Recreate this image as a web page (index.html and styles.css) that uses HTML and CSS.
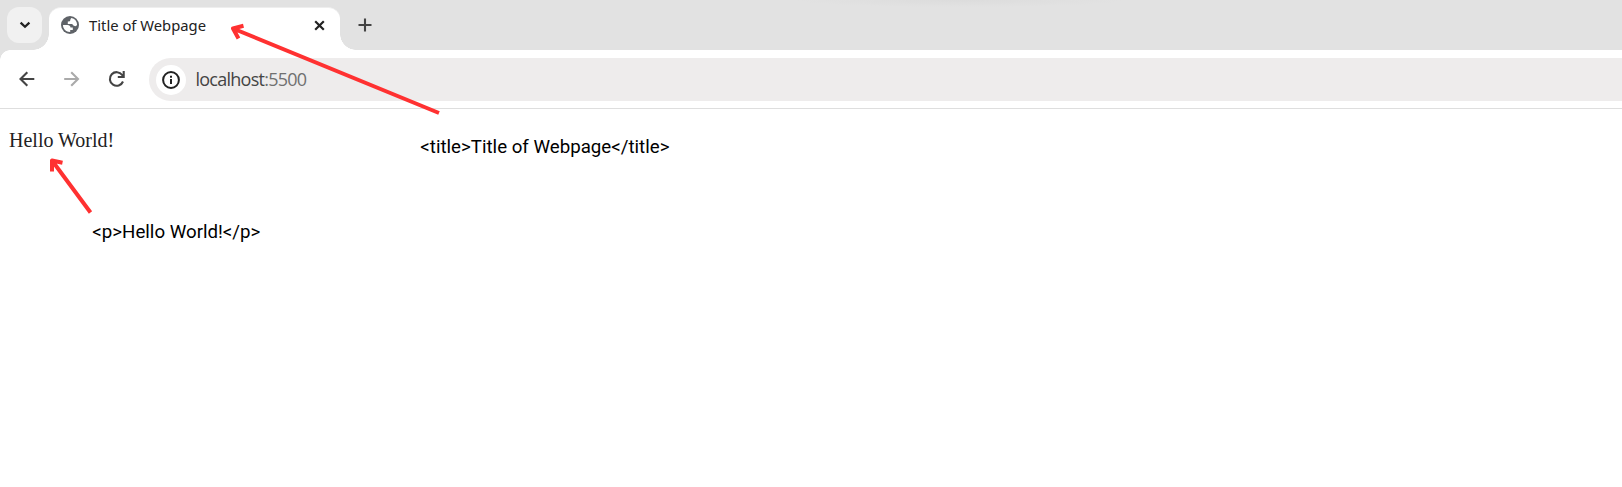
FILE: index.html
```html
<!DOCTYPE html>
<html lang="en">
<head>
<meta charset="utf-8">
<title>Title of Webpage</title>
<link rel="stylesheet" href="styles.css">
</head>
<body>
<header class="tabstrip">
  <button class="tab-search" aria-label="Search tabs"><svg width="12" height="8" viewBox="0 0 12 8"><path d="M1.600 1.700 6 5.800l4.400-4.100"/></svg></button>
  <div class="tab">
    <svg class="globe" width="18" height="18" viewBox="0 0 18 18"><circle cx="9" cy="9" r="9"/><path d="M2 9h4.500q2.800 0 3 2.600h2.300v2.300H9.200v2.200Q4.500 16.100 2.600 12Q1.900 10.500 2 9zM10.300 2Q15.800 3.200 16.100 8.800q-.5 1.600-2.500 1.300-2-.3-2.300-2H6.800V5.400q2.600.1 2.500-1.200 0-1.200 1-2.200z"/></svg>
    <span class="tab-title">Title of Webpage</span>
    <svg class="close" width="11" height="11" viewBox="0 0 11 11"><path d="m1.200 1.200 8.600 8.600M9.800 1.200 1.200 9.800"/></svg>
  </div>
  <svg class="new-tab" width="14" height="14" viewBox="0 0 14 14"><path d="M7 .5v13M.5 7h13"/></svg>
</header>
<nav class="toolbar">
  <svg class="nav-icon back" width="16" height="16" viewBox="0 0 16 16"><path d="M15.300 8H1.500M8.300 1.200 1.500 8l6.800 6.800"/></svg>
  <svg class="nav-icon forward" width="16" height="16" viewBox="0 0 16 16"><path d="M.2 8H14M7.200 1.200 14 8l-6.800 6.800"/></svg>
  <svg class="nav-icon reload" width="18" height="18" viewBox="0 0 18 18"><path d="M15 11.500A6.800 6.800 0 1 1 14.200 5l1.300 1.500M15.700 1v6H9.800"/></svg>
  <div class="address">
    <span class="site-info"><svg width="18" height="18" viewBox="0 0 18 18"><circle cx="9" cy="9" r="7.900"/><path d="M9 8v5M9 4.700v2"/></svg></span>
    <span class="url">localhost<span class="port">:5500</span></span>
  </div>
</nav>
<main class="page">
  <p class="hello">Hello World!</p>
  <svg class="arrows" width="460" height="230" viewBox="0 0 460 230"><path d="M439 113 233 28.500M243.500 25.800 233 28.500l5.500 10M90.500 212.500 52 160.500M62.500 162.700 52 160.500v11"/></svg>
  <span class="note note-title">&lt;title&gt;Title of Webpage&lt;/title&gt;</span>
  <span class="note note-p">&lt;p&gt;Hello World!&lt;/p&gt;</span>
</main>
</body>
</html>
```
FILE: styles.css
```css
* { box-sizing: border-box; }
body { margin: 0; background: #fff; height: 487px; overflow: hidden; }
svg { display: block; fill: none; flex: none; }

.tabstrip {
  display: flex;
  height: 50px;
  padding: 7px 0 0 7px;
  background: radial-gradient(ellipse 165px 7px at 960px 0, #dcdcdc, #e2e2e2) #e2e2e2;
}
.tab-search {
  display: grid;
  place-items: center;
  width: 35px;
  height: 36px;
  padding: 0;
  border: 0;
  border-radius: 12px;
  background: #f1f1f1;
}
.tab-search path { stroke: #222; stroke-width: 2.300; }
.tab {
  position: relative;
  display: flex;
  align-items: center;
  width: 291px;
  height: 43px;
  margin-left: 7px;
  padding: 0 15px 8px 11px;
  border-radius: 12px 12px 0 0;
  border-top: 1px solid #eee;
  background: #fff;
}
.tab::before, .tab::after {
  content: "";
  position: absolute;
  bottom: 0;
  width: 16px;
  height: 16px;
}
.tab::before { left: -16px; background: radial-gradient(circle at 0 0, transparent 15.500px, #fff 16px); }
.tab::after { right: -16px; background: radial-gradient(circle at 100% 0, transparent 15.500px, #fff 16px); }
.globe { margin-left: .5px; }
.globe circle { fill: #5f6368; }
.globe path { fill: #fff; }
.tab-title {
  margin-left: 10.500px;
  font: 14.800px "Noto Sans", sans-serif;
  color: #222;
  white-space: nowrap;
}
.close { margin-left: auto; }
.close path { stroke: #222; stroke-width: 2.200; }
.new-tab { margin: 11px 0 0 18px; }
.new-tab path { stroke: #444; stroke-width: 2.100; }

.toolbar {
  position: relative;
  display: flex;
  align-items: center;
  height: 59px;
  padding: 0 0 0 19px;
  border-bottom: 1px solid #dedede;
  background: #fff;
}
.toolbar::before {
  content: "";
  position: absolute;
  left: 0;
  top: 0;
  width: 10px;
  height: 10px;
  background: radial-gradient(circle at 100% 100%, transparent 9.500px, #e2e2e2 10px);
}
.nav-icon path { stroke: #444; stroke-width: 2.100; }
.forward { margin-left: 29px; }
.forward path { stroke: #aaa; }
.reload { margin-left: 28px; }
.address {
  display: flex;
  align-items: center;
  flex: 1;
  height: 43px;
  margin: 1px 0 0 23px;
  padding-left: 7px;
  border-radius: 22px 0 0 22px;
  background: #eeecec;
}
.site-info {
  display: grid;
  place-items: center;
  width: 30px;
  height: 30px;
  border-radius: 50%;
  background: #fff;
}
.site-info circle, .site-info path { stroke: #222; stroke-width: 2; }
.url {
  margin: -1px 0 0 9.500px;
  font: 400 18px "Open Sans", sans-serif;
  letter-spacing: -.75px;
  color: #444;
}
.port { color: #707070; }

.page { height: 378px; padding: 20px 0 0 9px; }
.hello { margin: 0; font: 20px/23px "Liberation Serif", serif; color: #222; }
.arrows { position: absolute; left: 0; top: 0; }
.arrows path { stroke: #ff3131; stroke-width: 4; stroke-linejoin: round; }
.note {
  position: absolute;
  font: 18.700px/22px Roboto, sans-serif;
  color: #000;
  white-space: nowrap;
}
.note-title { left: 420.300px; top: 136px; }
.note-p { left: 92.300px; top: 221px; }
```
